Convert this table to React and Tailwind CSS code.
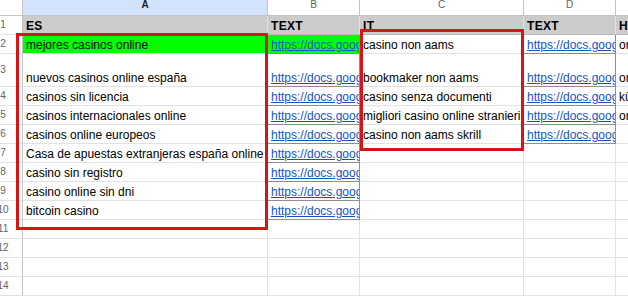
import React from 'react';

const LINK = 'https://docs.google.com/document/d/1xKq';

const rowHeights = ['h-[19px]', 'h-[19px]', 'h-[33px]', 'h-[19px]', 'h-[19px]', 'h-[19px]', 'h-[19px]', 'h-[19px]', 'h-[19px]', 'h-[19px]', 'h-[19px]', 'h-[19px]', 'h-[19px]', 'h-[19px]'];

// one entry per row: [A, B, C, D, E]
const rows = [
  ['ES', 'TEXT', 'IT', 'TEXT', 'HU'],
  ['mejores casinos online', LINK, 'casino non aams', LINK, 'online kaszinók'],
  ['nuevos casinos online españa', LINK, 'bookmaker non aams', LINK, 'online kaszinó'],
  ['casinos sin licencia', LINK, 'casino senza documenti', LINK, 'külföldi kaszinó'],
  ['casinos internacionales online', LINK, 'migliori casino online stranieri', LINK, 'online kaszinó'],
  ['casinos online europeos', LINK, 'casino non aams skrill', LINK, ''],
  ['Casa de apuestas extranjeras españa online', LINK, '', '', ''],
  ['casino sin registro', LINK, '', '', ''],
  ['casino online sin dni', LINK, '', '', ''],
  ['bitcoin casino', LINK, '', '', ''],
  ['', '', '', '', ''],
  ['', '', '', '', ''],
  ['', '', '', '', ''],
  ['', '', '', '', ''],
];

const colWidths = ['w-[245px]', 'w-[92px]', 'w-[164px]', 'w-[92px]', 'w-[100px]'];

function Cell({ value, row, col }) {
  const isHead = row === 0;
  const isLink = value && value.startsWith('https');
  let bg = 'bg-white';
  if (isHead) bg = 'bg-[#cccccc]';
  if (row === 1 && col < 2) bg = 'bg-[#00ff00]';

  return (
    <div
      className={`${colWidths[col]} shrink-0 h-full overflow-hidden flex items-end pl-[3px] pb-[1px] border-r border-b ${bg} ${
        isLink ? 'border-[#8e8e8e]' : isHead ? 'border-r-[#e2e2e2] border-b-[#b9b9b9]' : 'border-[#e2e2e2]'
      }`}
    >
      <span
        className={`whitespace-nowrap text-[12px] leading-[14px] ${
          isHead ? 'font-bold text-black tracking-[0.3px]' : isLink ? 'text-[#1155cc] underline' : 'text-black'
        }`}
      >
        {value}
      </span>
    </div>
  );
}

export default function App() {
  const letters = ['A', 'B', 'C', 'D', 'E'];

  return (
    <div className="relative w-[628px] h-[298px] overflow-hidden bg-white" style={{ fontFamily: '"Liberation Sans", Arial, sans-serif' }}>
      {/* column letters */}
      <div className="flex h-[16px]">
        <div className="w-[23px] shrink-0 border-r border-b border-[#c4c4c4] bg-white" />
        {letters.map((l, i) => (
          <div
            key={l}
            className={`${colWidths[i]} shrink-0 flex justify-center border-r border-b border-[#c4c4c4] ${
              i === 0 ? 'bg-[#d3e3fd] text-[#1f1f1f] font-bold' : 'bg-white text-[#5f6368]'
            }`}
          >
            <span className="text-[10px] leading-[9px]">{l}</span>
          </div>
        ))}
      </div>

      {rows.map((r, ri) => (
        <div key={ri} className={`flex ${rowHeights[ri]}`}>
          <div className="w-[23px] shrink-0 h-full overflow-hidden flex items-center border-r border-b border-r-[#c4c4c4] border-b-[#e2e2e2] bg-white">
            <div className="w-[6px] flex justify-center">
              <span className="text-[10px] leading-[10px] text-[#5f6368] whitespace-nowrap">{ri + 1}</span>
            </div>
          </div>
          {r.map((v, ci) => (
            <Cell key={ci} value={v} row={ri} col={ci} />
          ))}
        </div>
      ))}

      {/* red highlight boxes */}
      <div className="absolute left-[16px] top-[33px] w-[252px] h-[197px] border-[3px] border-[#d91414]" />
      <div className="absolute left-[360px] top-[29px] w-[164px] h-[122px] border-[3px] border-[#d91414]" />
    </div>
  );
}
